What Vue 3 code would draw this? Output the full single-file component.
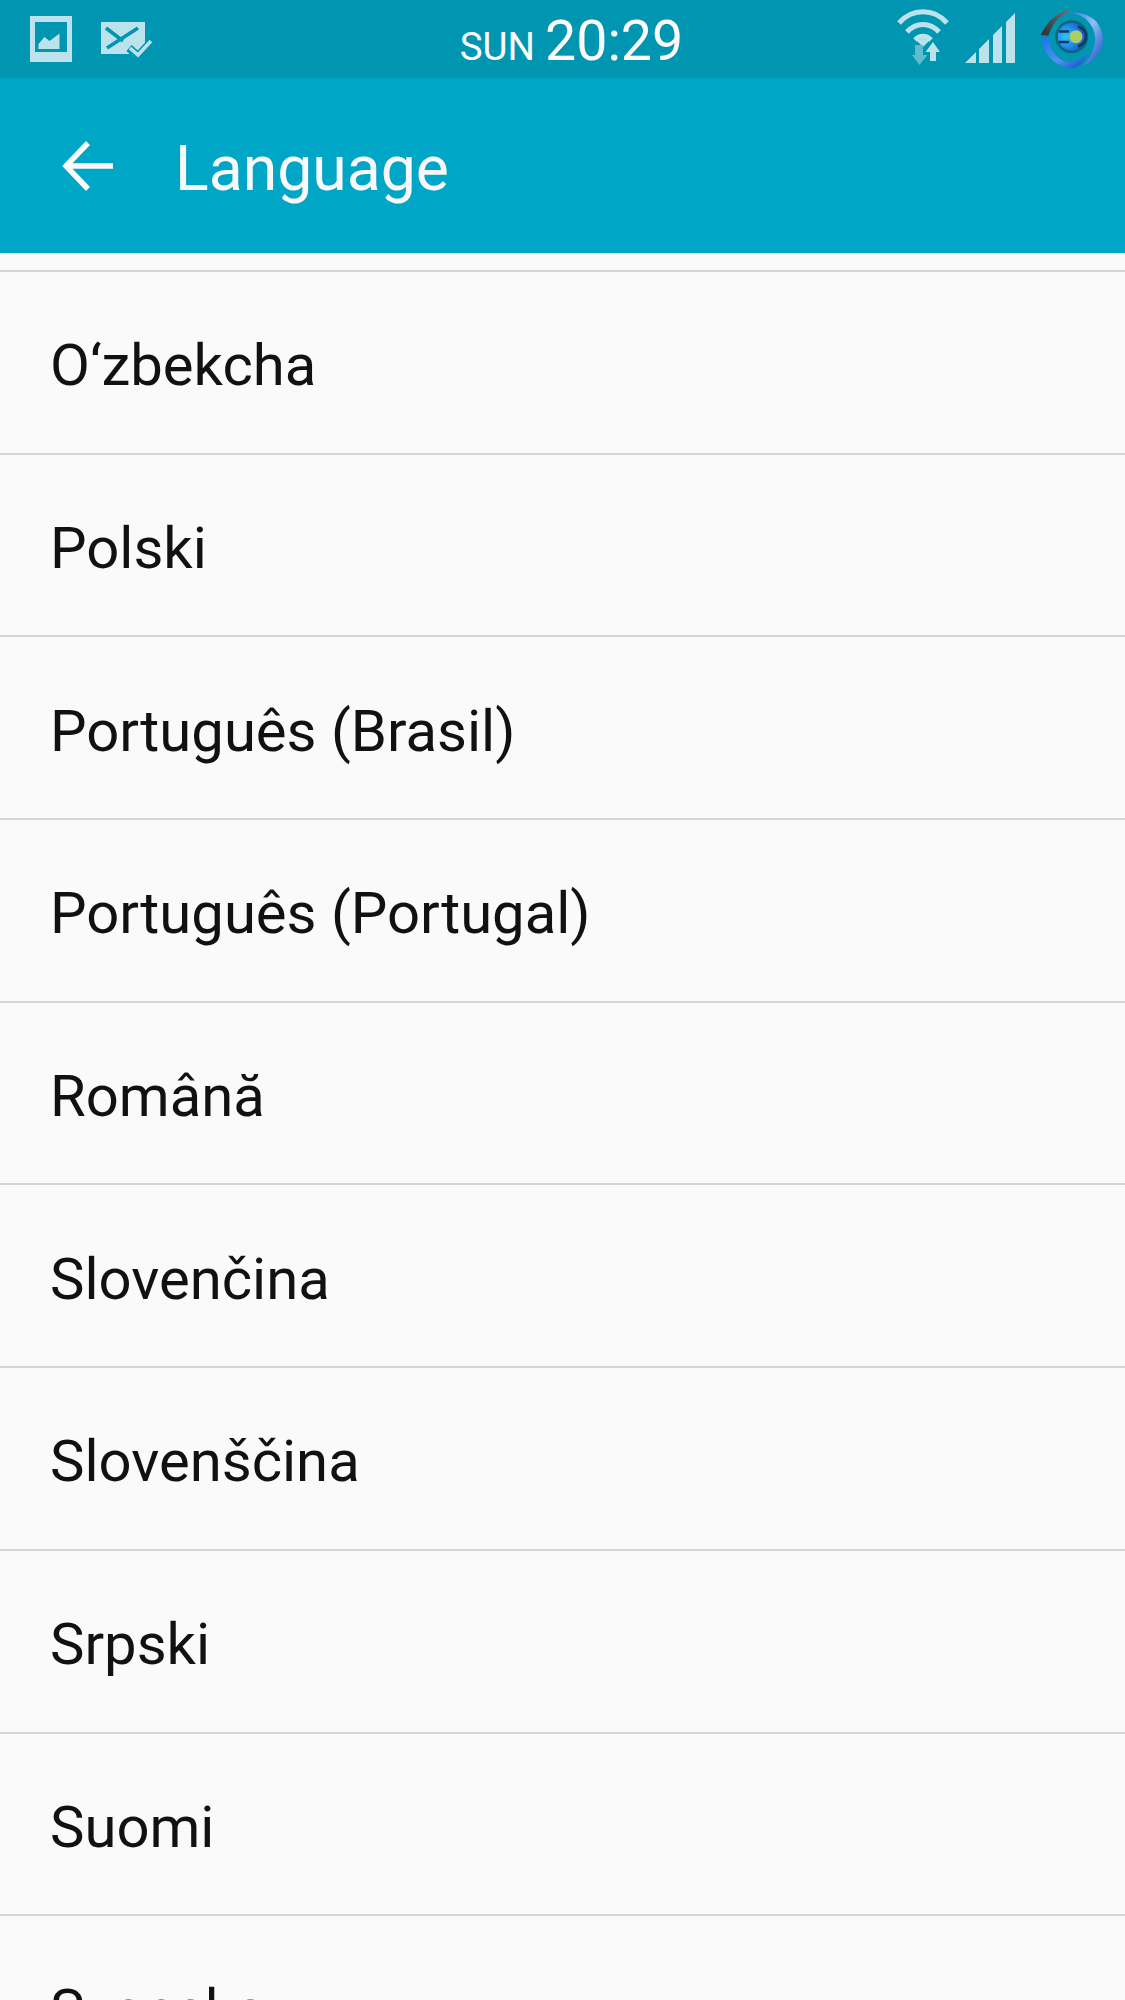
<script setup>
const languages = ['O‘zbekcha','Polski','Português (Brasil)','Português (Portugal)','Română','Slovenčina','Slovenščina','Srpski','Suomi','Svenska']
</script>

<template>
  <div class="screen">
    <div class="status">
      <div class="status-left">
        <svg class="ic-pic" width="44" height="48" viewBox="0 0 44 48">
          <path fill="#bce3ec" fill-rule="evenodd" d="M1 1h42v46H1zM6 7v30h32V7z"/>
          <path fill="#bce3ec" d="M9.500 34v-5l6-7 5 4 10-7.500v15.500z"/>
        </svg>
        <svg class="ic-mail" width="52" height="38" viewBox="0 0 52 38">
          <path fill="#bce3ec" d="M1 1h44v32H1z"/>
          <path fill="none" stroke="#0096b2" stroke-width="3.600" d="M6 7l17 13M38 7L7 27"/>
          <path fill="none" stroke="#0096b2" stroke-width="8" d="M29 27l9 8 13-14"/>
          <path fill="none" stroke="#bce3ec" stroke-width="3.600" d="M30 27l8 7 13-14"/>
        </svg>
      </div>
      <div class="clock">
        <span class="day">SUN</span>
        <span class="time">20:29</span>
      </div>
      <div class="status-right">
        <svg class="ic-wifi" width="54" height="58" viewBox="0 0 54 58">
          <g fill="none" stroke="#bce3ec" stroke-width="5">
            <path d="M3 14C16 -1 38 -1 51 14"/>
            <path d="M11 23C20 13 34 13 43 23"/>
            <path d="M19 31C24 26 30 26 35 31"/>
          </g>
          <path fill="#bce3ec" d="M27 38l-6-6c4-3 8-3 12 0z"/>
          <path fill="#5fbccf" d="M19 36h8v10h4.500L23.500 56 16 46h3z"/>
          <path fill="#bce3ec" d="M37 33l7 10h-4v9h-6V43h-4.500z"/>
        </svg>
        <svg class="ic-signal" width="50" height="50" viewBox="0 0 50 50">
          <path fill="#bce3ec" d="M0 50L11 39v11zM14 36l10-10v24H14zM28 22l9-9v37h-9zM41 9l9-9v50h-9z"/>
        </svg>
        <svg class="ic-logo" width="68" height="68" viewBox="0 0 68 68">
          <defs>
            <linearGradient id="arcLeft" x1="0" y1="0" x2="1" y2="1">
              <stop offset="0" stop-color="#1f6fe8"/>
              <stop offset="0.55" stop-color="#4a96f2"/>
              <stop offset="1" stop-color="#1540c8"/>
            </linearGradient>
            <linearGradient id="arcRight" x1="0" y1="0" x2="1" y2="1">
              <stop offset="0" stop-color="#2a6fe6"/>
              <stop offset="0.45" stop-color="#8fc0f5"/>
              <stop offset="1" stop-color="#1a46c8"/>
            </linearGradient>
            <linearGradient id="arcGray" x1="0" y1="1" x2="1" y2="0">
              <stop offset="0" stop-color="#2c2f33"/>
              <stop offset="1" stop-color="#6d7378"/>
            </linearGradient>
            <radialGradient id="core" cx="0.3" cy="0.5" r="0.75">
              <stop offset="0" stop-color="#2fc8f8"/>
              <stop offset="1" stop-color="#1447d8"/>
            </radialGradient>
          </defs>
          <path fill="url(#arcGray)" d="M2.700 30Q12 10 32 4L32 7Q17 11 10.300 30.700Z"/>
          <path fill="url(#arcLeft)" d="M3.300 31.700Q7 60 33.700 63.300Q45 62 50.300 46.700Q43.700 56.700 32 57.300Q13.700 55 10.300 31.700Z"/>
          <path fill="url(#arcRight)" d="M30.300 8.300Q45.300 5 58.700 16.700Q70.300 35 60.300 48.300Q55.300 56.700 45.300 60.700Q53.700 51.700 57 38.300Q58.700 23.300 47 13.300Q38.700 8.300 30.300 8.300Z"/>
          <circle cx="33.700" cy="31.700" r="16.500" fill="#0e6478"/>
          <circle cx="33.700" cy="31.700" r="14" fill="url(#core)"/>
          <circle cx="38" cy="31.700" r="6.500" fill="#a9cf62"/>
          <path fill="none" stroke="#123a60" stroke-width="2.500" d="M21 26.500h10M21 37h10M40 21.500c6 2 8 6 8 10s-2 8-8 10"/>
        </svg>
      </div>
    </div>
    <header class="toolbar">
      <svg class="back" width="51" height="50" viewBox="0 0 51 50">
        <path fill="none" stroke="#fafafa" stroke-width="5.500" d="M26 2L4 25l22 23M4 25h47"/>
      </svg>
      <h1 class="title">Language</h1>
    </header>
    <ul class="list">
      <li v-for="item in languages" :key="item" class="row">{{ item }}</li>
    </ul>
  </div>
</template>

<style scoped>
.screen {
  width: 1125px;
  height: 2000px;
  overflow: hidden;
  background: #fafafa;
  font-family: Roboto, "Liberation Sans", sans-serif;
  color: #111;
}
.status {
  height: 78px;
  background: #0096b2;
  display: grid;
  grid-template-columns: 1fr auto 1fr;
  align-items: start;
  padding: 0 19px 0 29px;
  box-sizing: border-box;
}
.status-left {
  display: flex;
  align-items: flex-start;
  padding-top: 15px;
}
.ic-mail {
  margin: 6px 0 0 27px;
}
.clock {
  display: flex;
  align-items: baseline;
  gap: 10px;
  color: #fdfafa;
  height: 78px;
  line-height: 84px;
  padding-left: 8px;
}
.day {
  font-size: 38.500px;
}
.time {
  font-size: 55.500px;
}
.status-right {
  display: flex;
  justify-content: flex-end;
  align-items: flex-start;
}
.ic-wifi {
  margin-top: 9px;
}
.ic-signal {
  margin: 13px 0 0 15px;
}
.ic-logo {
  margin: 5px 0 0 23px;
}
.toolbar {
  height: 175px;
  background: #00a6c6;
  display: flex;
  align-items: center;
  padding-left: 62px;
  box-sizing: border-box;
}
.back {
  flex: none;
}
.title {
  margin: 0 0 0 62px;
  padding-top: 5px;
  font-size: 62.500px;
  font-weight: 400;
  color: #f9f9fb;
}
.list {
  list-style: none;
  margin: 0;
  padding: 16px 0 0;
  border-top: 1px solid #fff;
}
.row {
  height: 182.700px;
  box-sizing: border-box;
  border-top: 2px solid #d4d4d4;
  padding: 6px 0 0 50px;
  display: flex;
  align-items: center;
  font-size: 58px;
  color: #111;
}
</style>
